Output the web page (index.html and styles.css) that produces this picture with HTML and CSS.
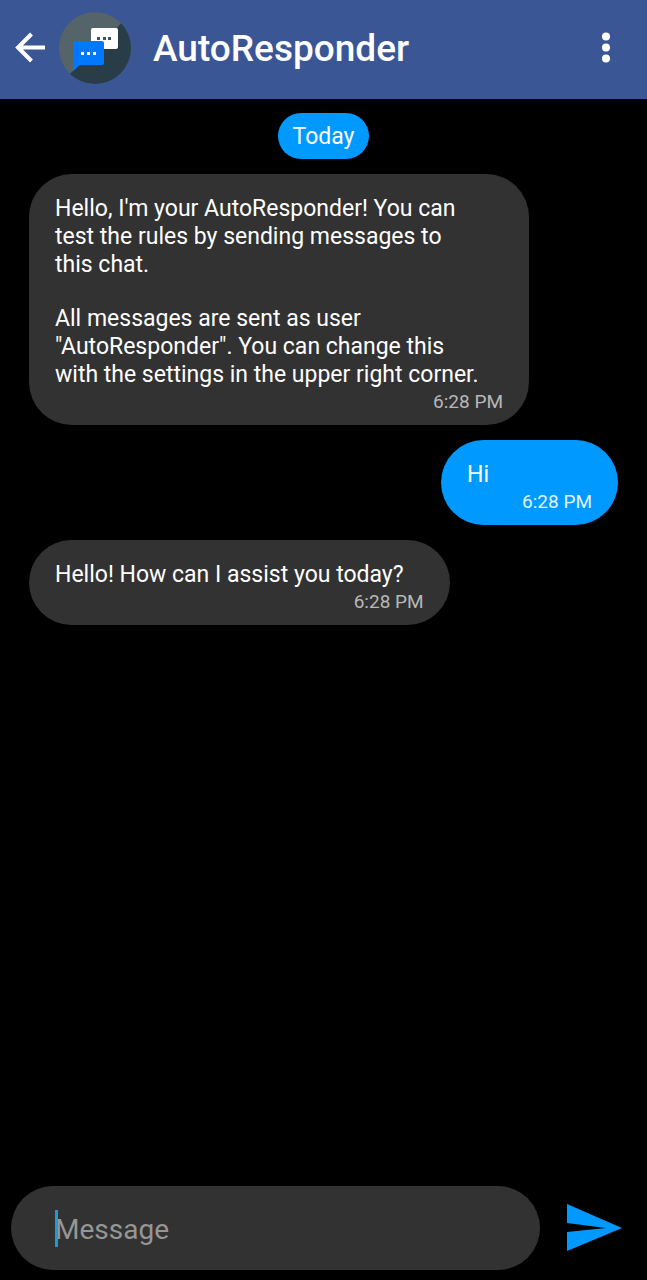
FILE: index.html
```
<!DOCTYPE html>
<html lang="en">

<head>
    <meta charset="UTF-8">
    <meta name="viewport" content="width=device-width, initial-scale=1.0">
    <title>AutoResponder</title>
    <link rel="stylesheet" href="styles.css">
</head>

<body>

    <header class="top-bar">
        <button class="icon-button" type="button" aria-label="Back">
            <svg width="32" height="32" viewBox="0 0 32 32" fill="none" stroke="#fff" stroke-width="4">
                <path d="M31 15.500H4M17.500 2L4 15.500l13.500 13.500" />
            </svg>
        </button>
        <svg class="avatar" width="72" height="72" viewBox="0 0 72 72" aria-hidden="true">
            <clipPath id="avatarClip">
                <circle cx="36" cy="36" r="36" />
            </clipPath>
            <g clip-path="url(#avatarClip)">
                <rect width="72" height="72" fill="#546469" />
                <path d="M57 17L72 0v72H0l14-13z" fill="#283d47" />
            </g>
            <rect x="32" y="16" width="27" height="21" rx="2" fill="#fff" />
            <g fill="#3c5560">
                <rect x="38" y="25" width="3" height="3" />
                <rect x="44" y="25" width="3" height="3" />
                <rect x="49" y="25" width="3" height="3" />
            </g>
            <path d="M17 29h26q2 0 2 2v20q0 2-2 2H21l-7 6V31q0-2 3-2z" fill="#0078ff" />
            <g fill="#fff">
                <rect x="22" y="40" width="3" height="3" />
                <rect x="28" y="40" width="3" height="3" />
                <rect x="34" y="40" width="3" height="3" />
            </g>
        </svg>
        <h1>AutoResponder</h1>
        <button class="icon-button" type="button" aria-label="More options">
            <svg width="32" height="32" viewBox="0 0 32 32" fill="#fff">
                <circle cx="16" cy="4.500" r="4" />
                <circle cx="16" cy="15.500" r="4" />
                <circle cx="16" cy="26.500" r="4" />
            </svg>
        </button>
    </header>

    <main class="chat">
        <div class="day">Today</div>

        <div class="message received">
            <p>Hello, I'm your AutoResponder! You can test the rules by sending messages to this chat.</p>
            <p>All messages are sent as user "AutoResponder". You can change this with the settings in the upper right corner.</p>
            <time>6:28 PM</time>
        </div>

        <div class="message sent">
            <p>Hi</p>
            <time>6:28 PM</time>
        </div>

        <div class="message received">
            <p>Hello! How can I assist you today?</p>
            <time>6:28 PM</time>
        </div>
    </main>

    <form class="composer">
        <div class="field">
            <input type="text" placeholder="Message" aria-label="Message">
            <span class="caret"></span>
        </div>
        <button class="icon-button" type="button" aria-label="Send">
            <svg width="56" height="48" viewBox="0 0 56 48" fill="#0099ff">
                <path d="M1 0L56 24 1 47V28l39-4L1 19z" />
            </svg>
        </button>
    </form>

</body>

</html>
```

FILE: styles.css
```
* {
    box-sizing: border-box;
}

body {
    margin: 0;
    min-height: 100vh;
    display: flex;
    flex-direction: column;
    background-color: #000;
    color: #fff;
    font-family: Roboto, sans-serif;
}

.icon-button {
    display: flex;
    padding: 0;
    background: none;
    border: none;
    cursor: pointer;
}

/* header */
.top-bar {
    display: flex;
    align-items: center;
    height: 99px;
    padding: 0 25px 4px 14px;
    background-color: #3a5695;
}

.avatar {
    margin-left: 13px;
}

.top-bar h1 {
    flex: 1;
    margin: 2px 0 0 22px;
    font-size: 37px;
    font-weight: 500;
}

/* messages */
.chat {
    flex: 1;
    display: flex;
    flex-direction: column;
    align-items: flex-start;
    gap: 15px;
    padding: 14px 29px;
}

.day {
    align-self: center;
    padding: 10px 15px 8px;
    border-radius: 23px;
    background-color: #0099ff;
    font-size: 23px;
    line-height: 28px;
}

.message {
    display: flex;
    flex-direction: column;
    min-width: 177px;
    max-width: 500px;
    padding: 21px 26px 10px;
    border-radius: 43px;
}

.received {
    background-color: #323232;
}

.sent {
    align-self: flex-end;
    background-color: #0099ff;
}

.message p {
    margin: 0 20px 0 0;
    font-size: 23px;
    line-height: 28px;
}

.message p + p {
    margin-top: 26px;
}

.message time {
    align-self: flex-end;
    color: #b8b8b8;
    font-size: 19px;
    line-height: 26px;
}

.sent time {
    color: #e0f5ff;
}

/* message box */
.composer {
    display: flex;
    align-items: center;
    gap: 26px;
    padding: 0 25px 10px 11px;
}

.field {
    position: relative;
    flex: 1;
}

.field input {
    width: 100%;
    height: 84px;
    padding: 2px 44px 0;
    border: none;
    border-radius: 42px;
    outline: none;
    background-color: #323232;
    color: #fff;
    font-family: inherit;
    font-size: 28px;
}

.field input::placeholder {
    color: #969696;
}

.caret {
    position: absolute;
    top: 24px;
    left: 44px;
    width: 3px;
    height: 37px;
    background-color: #1b9bd7;
}
```
